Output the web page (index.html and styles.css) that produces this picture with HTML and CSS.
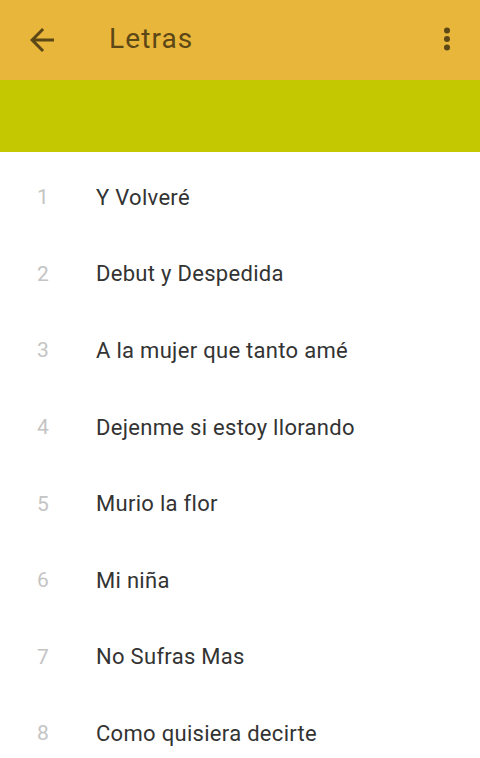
FILE: index.html
```html
<!DOCTYPE html>
<html lang="es">
<head>
  <meta charset="UTF-8">
  <title>Letras</title>
  <link rel="stylesheet" href="styles.css">
</head>
<body>

<header class="toolbar">
  <svg class="back" width="36" height="36" viewBox="0 0 24 24">
    <path d="M20 11H7.83l5.59-5.59L12 4l-8 8 8 8 1.41-1.41L7.83 13H20v-2z" fill="#5c4716"/>
  </svg>
  <h1>Letras</h1>
  <svg class="menu" width="24" height="32" viewBox="0 0 24 32">
    <circle cx="12" cy="7.5" r="3" fill="#5c4716"/>
    <circle cx="12" cy="16" r="3" fill="#5c4716"/>
    <circle cx="12" cy="24.5" r="3" fill="#5c4716"/>
  </svg>
</header>

<div class="banner"></div>

<ul class="songs">
  <li><span class="num">1</span><span class="title">Y Volveré</span></li>
  <li><span class="num">2</span><span class="title">Debut y Despedida</span></li>
  <li><span class="num">3</span><span class="title">A la mujer que tanto amé</span></li>
  <li><span class="num">4</span><span class="title">Dejenme si estoy llorando</span></li>
  <li><span class="num">5</span><span class="title">Murio la flor</span></li>
  <li><span class="num">6</span><span class="title">Mi niña</span></li>
  <li><span class="num">7</span><span class="title">No Sufras Mas</span></li>
  <li><span class="num">8</span><span class="title">Como quisiera decirte</span></li>
</ul>

</body>
</html>
```

FILE: styles.css
```css
body {
  margin: 0;
  font-family: Roboto, "Liberation Sans", sans-serif;
  background: #fff;
  overflow: hidden;
}
.toolbar {
  height: 80px;
  background: #e8b63a;
  display: flex;
  align-items: center;
  padding: 0 21px 0 24px;
  box-sizing: border-box;
}
.toolbar h1 {
  flex: 1;
  margin: 0 0 3px 49px;
  font-size: 28px;
  font-weight: 400;
  letter-spacing: 1.1px;
  color: #5c4716;
}
.menu {
  margin-top: -2px;
}
.banner {
  height: 72px;
  background: #c3c800;
}
.songs {
  list-style: none;
  margin: 0;
  padding: 7px 0 0;
}
.songs li {
  height: 76.6px;
  display: flex;
  align-items: center;
}
.num {
  width: 96px;
  padding-left: 37px;
  box-sizing: border-box;
  font-size: 21px;
  color: #c4c4c4;
}
.title {
  font-size: 22px;
  letter-spacing: 0.3px;
  color: #333;
}
```
